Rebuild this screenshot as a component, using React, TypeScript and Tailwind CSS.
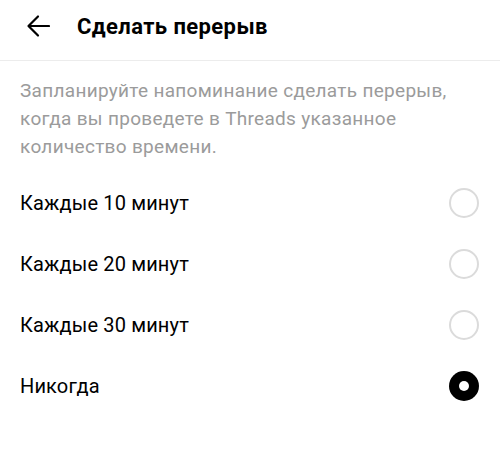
import { useState } from "react";

const options = ["Каждые 10 минут", "Каждые 20 минут", "Каждые 30 минут", "Никогда"];

export default function App() {
  const [selected, setSelected] = useState(3);

  return (
    <div className="h-[462px] w-[500px] bg-white font-['Roboto',sans-serif] text-black">
      <div className="flex h-[61px] items-center border-b border-[#ececec] pb-[8px]">
        <button type="button" className="ml-[26px] flex h-6 w-6 items-center justify-center">
          <svg width="24" height="24" viewBox="0 0 24 24" fill="none" stroke="black" strokeWidth="2.2" strokeLinecap="round" strokeLinejoin="round">
            <path d="M23 12H3" />
            <path d="M12 2.5l-9.5 9.5 9.5 9.5" />
          </svg>
        </button>
        <h1 className="ml-[27px] text-[22px] font-bold tracking-[0.4px]">Сделать перерыв</h1>
      </div>

      <p className="px-5 pt-[16px] text-[19px] leading-[28px] tracking-[0.3px] text-[#9b9b9b]">
        Запланируйте напоминание сделать перерыв, когда вы проведете в Threads указанное количество времени.
      </p>

      <div className="mt-[11px]">
        {options.map((label, i) => (
          <button
            key={label}
            type="button"
            onClick={() => setSelected(i)}
            className="flex h-[61px] w-full items-center justify-between pl-5 pr-[21px] text-left"
          >
            <span className="text-[20px] tracking-[0.15px]">{label}</span>
            {selected === i ? (
              <span className="flex h-[30px] w-[30px] items-center justify-center rounded-full bg-black">
                <span className="h-[10px] w-[10px] rounded-full bg-white" />
              </span>
            ) : (
              <span className="h-[30px] w-[30px] rounded-full border-2 border-[#dbdbdb]" />
            )}
          </button>
        ))}
      </div>
    </div>
  );
}
